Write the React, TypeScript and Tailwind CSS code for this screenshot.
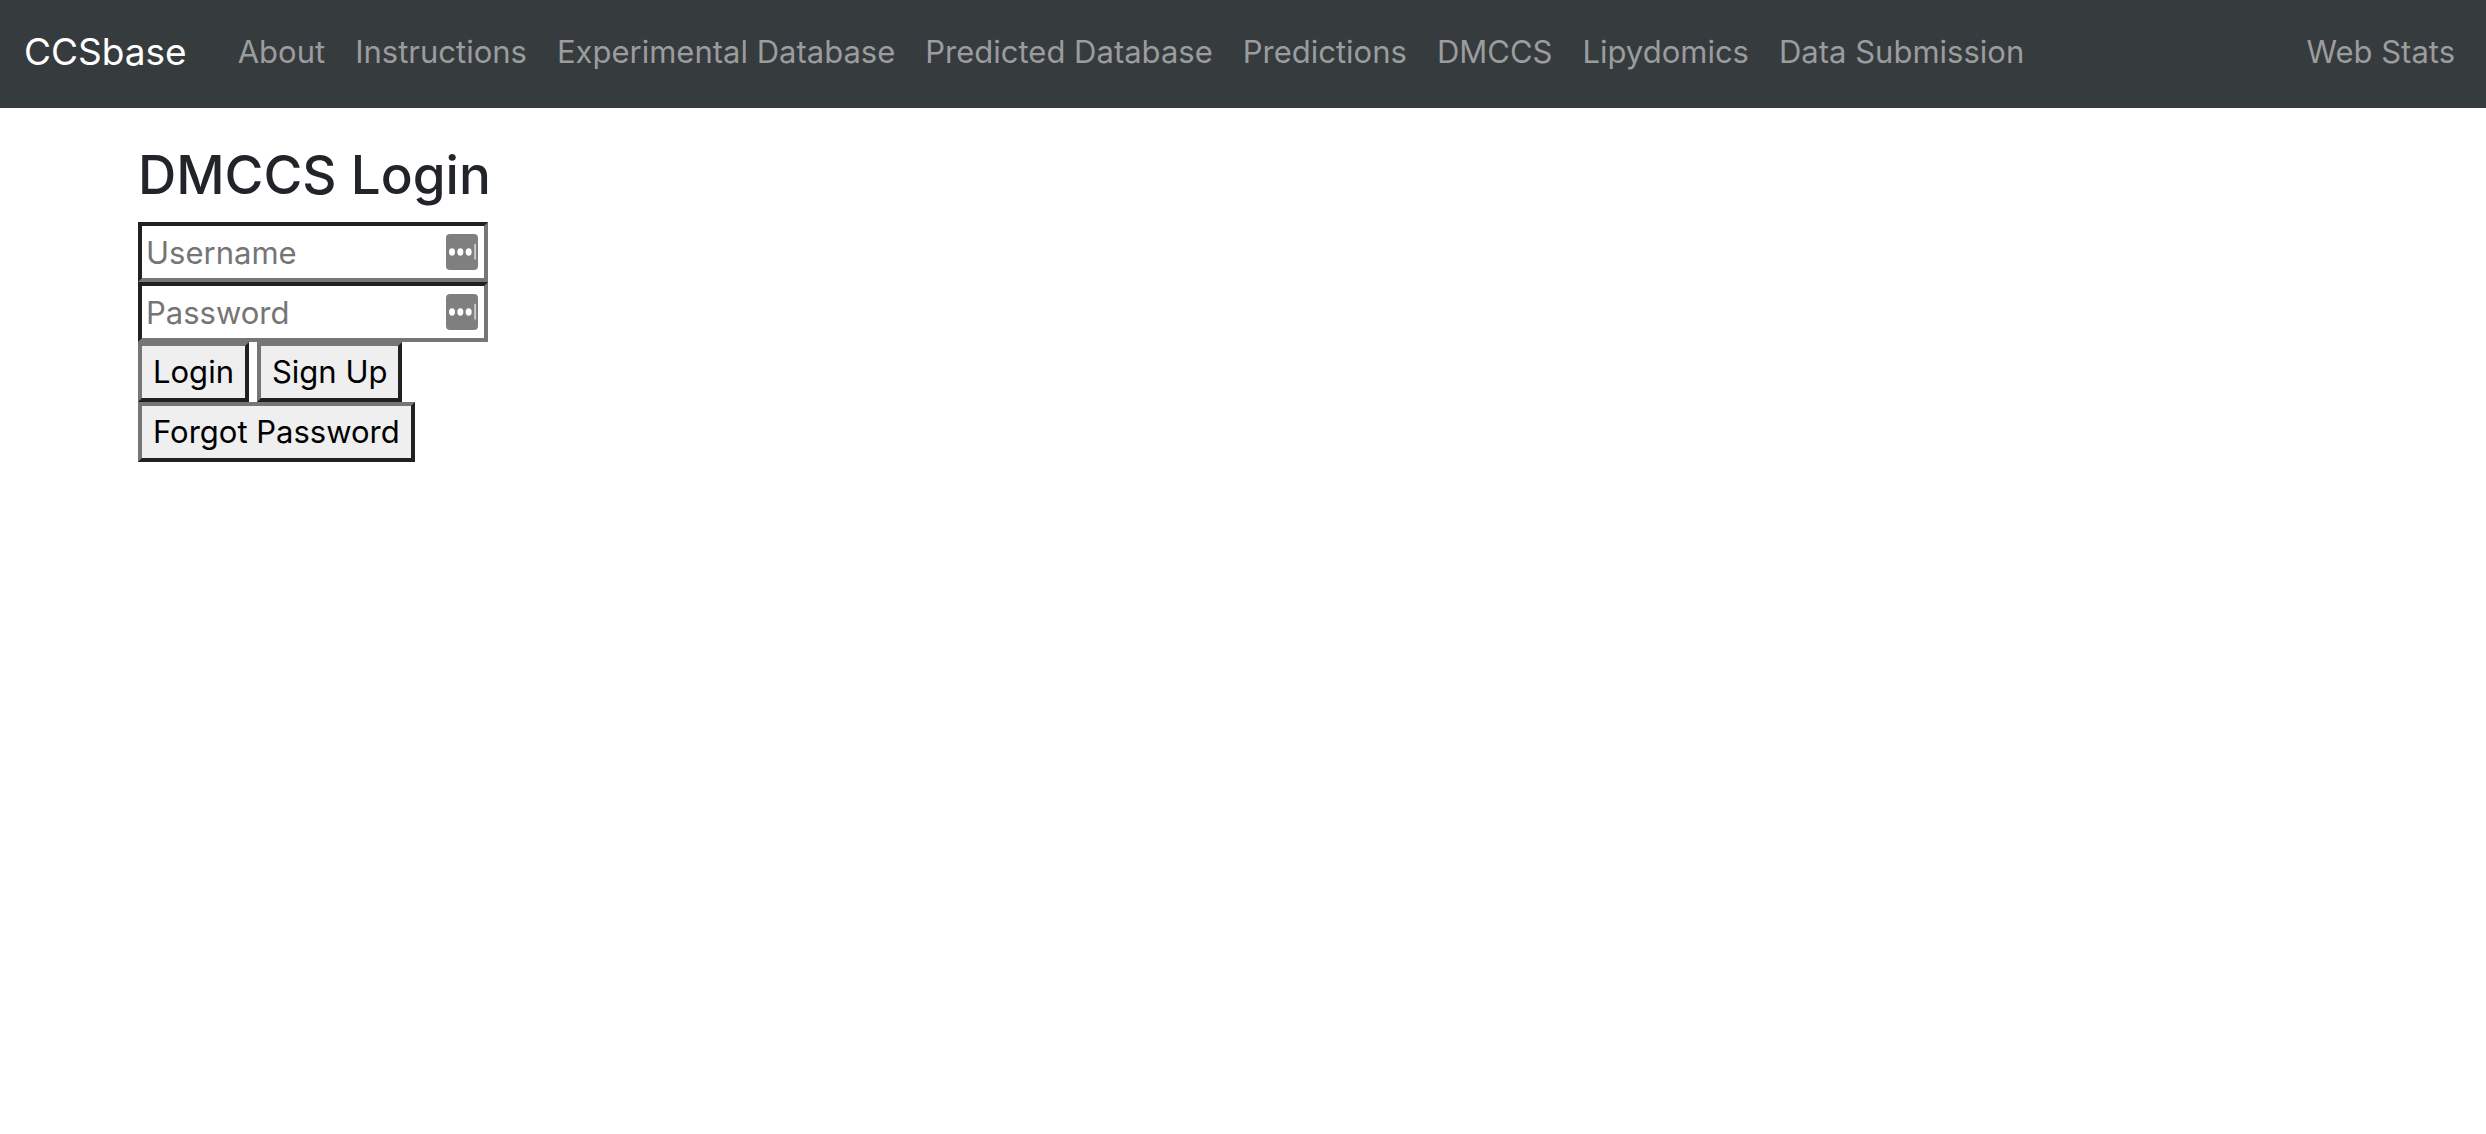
const links = [
  'About',
  'Instructions',
  'Experimental Database',
  'Predicted Database',
  'Predictions',
  'DMCCS',
  'Lipydomics',
  'Data Submission',
];

function ManagerIcon() {
  return (
    <svg
      aria-hidden="true"
      viewBox="0 0 32 36"
      className="pointer-events-none absolute right-[10px] top-3 h-9 w-8"
    >
      <rect width="32" height="36" rx="4" fill="#7f7f7f" />
      <ellipse cx="6" cy="18" rx="3" ry="3.7" fill="#fff" />
      <ellipse cx="14.3" cy="18" rx="3" ry="3.7" fill="#fff" />
      <ellipse cx="22.7" cy="18" rx="3" ry="3.7" fill="#fff" />
      <rect x="28.4" y="10" width="1.4" height="15.5" fill="#e4e4e4" />
    </svg>
  );
}

function Field({ label, type }: { label: string; type: string }) {
  return (
    <div className="relative w-[350px]">
      <input
        type={type}
        aria-label={label}
        placeholder={label}
        className="block h-[60px] w-full border-4 border-t-[#212121] border-l-[#212121] border-r-[#767676] border-b-[#767676] bg-white pl-1 pr-12 text-[31px] leading-[48px] text-black placeholder:text-[#757575] placeholder:opacity-100"
      />
      <ManagerIcon />
    </div>
  );
}

function ActionButton({ children }: { children: string }) {
  return (
    <button
      type="button"
      className="block h-[60px] border-4 border-t-[#767676] border-l-[#767676] border-r-[#212121] border-b-[#212121] bg-[#efefef] px-[11px] text-[31px] leading-[48px] text-black"
    >
      {children}
    </button>
  );
}

export default function App() {
  return (
    <div className="min-h-screen bg-white font-['Inter',sans-serif] text-[#212529]">
      <nav className="flex items-center bg-[#363b3e] pt-7 pb-8 pl-6 pr-4 text-[31px] leading-[48px] whitespace-nowrap">
        <a href="#home" className="mr-9 text-[37px] text-white">
          CCSbase
        </a>
        <ul className="flex">
          {links.map((link) => (
            <li key={link}>
              <a href="#" className="block px-[15px] text-[#9a9c9e]">
                {link}
              </a>
            </li>
          ))}
        </ul>
        <a href="#stats" className="ml-auto px-[15px] text-[#9a9c9e]">
          Web Stats
        </a>
      </nav>
      <main className="px-[138px] pt-8">
        <h1 className="pb-3 text-[53px] leading-[70px] font-medium">DMCCS Login</h1>
        <form>
          <Field label="Username" type="text" />
          <Field label="Password" type="password" />
          <div className="flex gap-2">
            <ActionButton>Login</ActionButton>
            <ActionButton>Sign Up</ActionButton>
          </div>
          <ActionButton>Forgot Password</ActionButton>
        </form>
      </main>
    </div>
  );
}
